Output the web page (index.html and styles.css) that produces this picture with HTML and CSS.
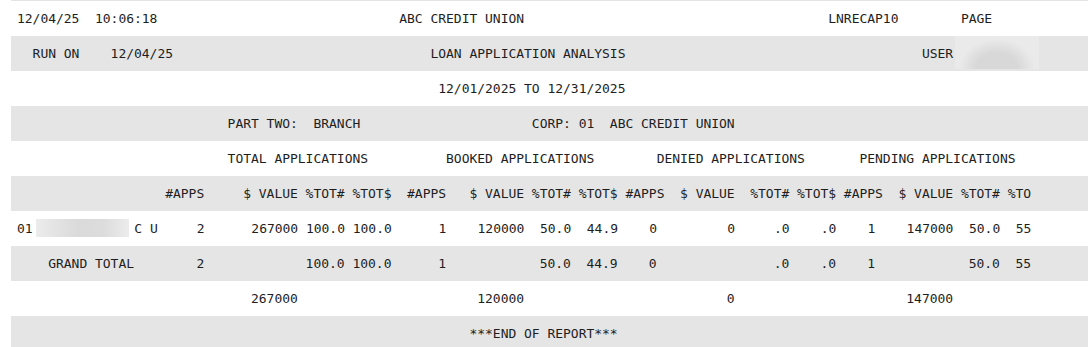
FILE: index.html
```html
<!DOCTYPE html>
<html lang="en">
<head>
<meta charset="utf-8">
<title>LNRECAP10 - Loan Application Analysis</title>
<link rel="stylesheet" href="styles.css">
</head>
<body>
<div class="report">
<div class="line">12/04/25  10:06:18                               ABC CREDIT UNION                                       LNRECAP10        PAGE</div>
<div class="line">  RUN ON    12/04/25                                 LOAN APPLICATION ANALYSIS                                      USER<span class="mask-user"></span></div>
<div class="line">                                                      12/01/2025 TO 12/31/2025</div>
<div class="line">                           PART TWO:  BRANCH                      CORP: 01  ABC CREDIT UNION</div>
<div class="line">                           TOTAL APPLICATIONS          BOOKED APPLICATIONS        DENIED APPLICATIONS       PENDING APPLICATIONS</div>
<div class="line">                   #APPS     $ VALUE %TOT# %TOT$  #APPS   $ VALUE %TOT# %TOT$ #APPS  $ VALUE  %TOT# %TOT$ #APPS  $ VALUE %TOT# %TO</div>
<div class="line">01<span class="mask-name"></span>C U     2      267000 100.0 100.0      1    120000  50.0  44.9    0         0     .0    .0    1    147000  50.0  55</div>
<div class="line">    GRAND TOTAL        2             100.0 100.0      1            50.0  44.9    0               .0    .0    1            50.0  55</div>
<div class="line">                              267000                       120000                          0                      147000</div>
<div class="line">                                                          ***END OF REPORT***</div>
</div>
</body>
</html>
```

FILE: styles.css
```css
* {
  box-sizing: border-box;
}

html,
body {
  margin: 0;
  background: #ffffff;
}

body {
  font-family: "DejaVu Sans Mono", "Liberation Mono", monospace;
  font-size: 13px;
  color: #1e1e1e;
}

.report {
  margin-left: 11px;
  border-top: 1px solid #e5e5e5;
}

.line {
  height: 35px;
  line-height: 35px;
  padding-left: 6px;
  white-space: pre;
  overflow: hidden;
  letter-spacing: -0.026px;
}

.line:nth-child(even) {
  background: #e5e5e5;
}

.mask-name {
  display: inline-block;
  vertical-align: top;
  width: 13ch;
  height: 18px;
  margin-top: 8px;
  background: linear-gradient(90deg,
      transparent 3px,
      #ececec 3px,
      #e2e2e2 25%,
      #dadada 45%,
      #dcdcdc 70%,
      #ececec calc(100% - 5px),
      transparent calc(100% - 5px));
}

.mask-user {
  display: inline-block;
  vertical-align: top;
  width: 84px;
  height: 34px;
  margin-top: -1px;
  margin-left: 2px;
  background:
    radial-gradient(ellipse 38px 30px at 50% 100%, #d8d8d8 55%, rgba(216, 216, 216, 0) 100%),
    #eaeaea;
}
```
